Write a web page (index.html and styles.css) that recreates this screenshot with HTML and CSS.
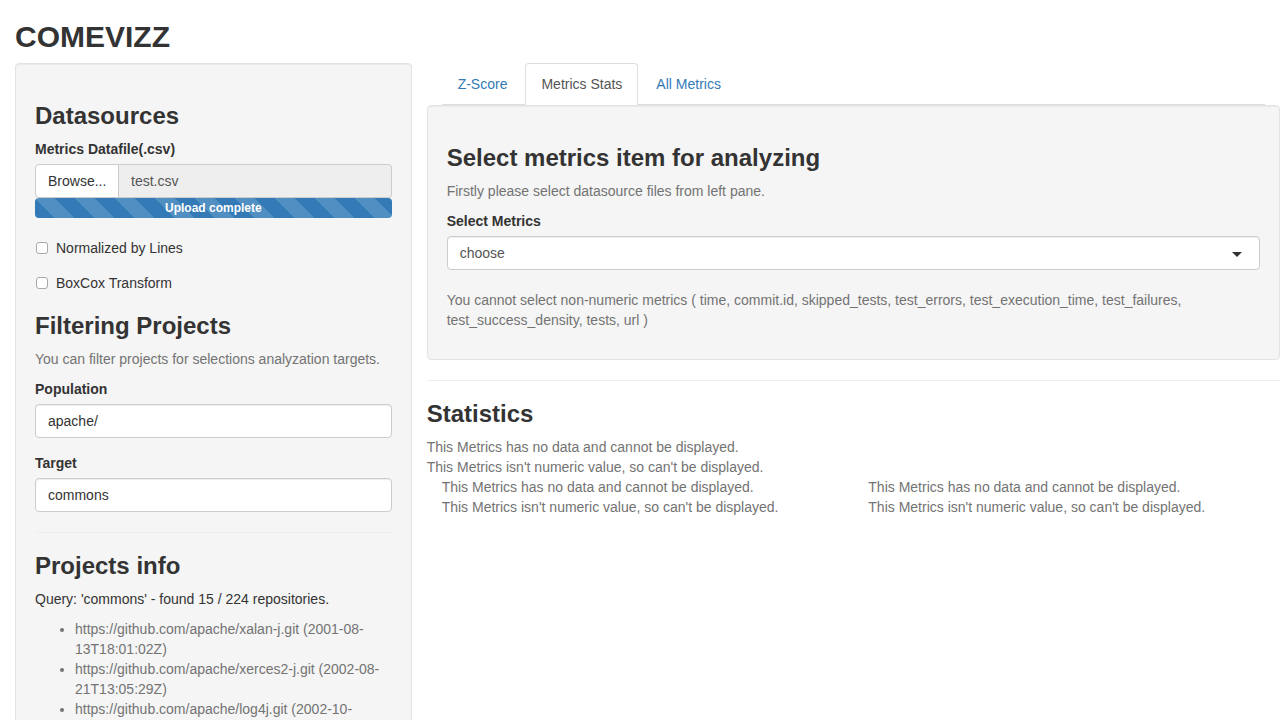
FILE: index.html
```html
<!DOCTYPE html>
<html>
<head>
<meta charset="utf-8">
<title>COMEVIZZ</title>
<link rel="stylesheet" href="styles.css">
</head>
<body>
<div class="container">
  <h2 class="title">COMEVIZZ</h2>
  <div class="row">
    <div class="col-side">
      <div class="well">
        <h3 class="heading">Datasources</h3>
        <div class="form-group file-group">
          <label class="ctl-label">Metrics Datafile(.csv)</label>
          <div class="input-group">
            <span class="btn-browse">Browse...</span>
            <span class="file-name">test.csv</span>
          </div>
          <div class="progress">
            <div class="progress-bar">Upload complete</div>
          </div>
        </div>
        <div class="form-group">
          <label class="checkbox"><span class="cb"></span>Normalized by Lines</label>
        </div>
        <div class="form-group">
          <label class="checkbox"><span class="cb"></span>BoxCox Transform</label>
        </div>
        <h3 class="heading">Filtering Projects</h3>
        <p class="help">You can filter projects for selections analyzation targets.</p>
        <div class="form-group">
          <label class="ctl-label">Population</label>
          <div class="text-input">apache/</div>
        </div>
        <div class="form-group">
          <label class="ctl-label">Target</label>
          <div class="text-input">commons</div>
        </div>
        <hr class="rule">
        <h3 class="heading">Projects info</h3>
        <p class="query">Query: 'commons' - found 15 / 224 repositories.</p>
        <ul class="projects">
          <li>https://github.com/apache/xalan-j.git (2001-08-13T18:01:02Z)</li>
          <li>https://github.com/apache/xerces2-j.git (2002-08-21T13:05:29Z)</li>
          <li>https://github.com/apache/log4j.git (2002-10-13T09:12:44Z)</li>
          <li>https://github.com/apache/commons-lang.git (2002-07-19T03:35:40Z)</li>
        </ul>
      </div>
    </div>
    <div class="col-main">
      <ul class="nav-tabs">
        <li class="tab"><a>Z-Score</a></li>
        <li class="tab active"><a>Metrics Stats</a></li>
        <li class="tab"><a>All Metrics</a></li>
      </ul>
      <div class="tab-content">
        <div class="well well-main">
          <h3 class="heading">Select metrics item for analyzing</h3>
          <p class="help">Firstly please select datasource files from left pane.</p>
          <div class="form-group">
            <label class="ctl-label">Select Metrics</label>
            <div class="select-input">choose<span class="caret"></span></div>
          </div>
          <p class="help help-note">You cannot select non-numeric metrics ( time, commit.id, skipped_tests, test_errors, test_execution_time, test_failures, test_success_density, tests, url )</p>
        </div>
        <hr class="rule rule-main">
        <h3 class="heading">Statistics</h3>
        <div class="msg">This Metrics has no data and cannot be displayed.</div>
        <div class="msg">This Metrics isn't numeric value, so can't be displayed.</div>
        <div class="stat-row">
          <div class="stat-col">
            <div class="msg">This Metrics has no data and cannot be displayed.</div>
            <div class="msg">This Metrics isn't numeric value, so can't be displayed.</div>
          </div>
          <div class="stat-col">
            <div class="msg">This Metrics has no data and cannot be displayed.</div>
            <div class="msg">This Metrics isn't numeric value, so can't be displayed.</div>
          </div>
        </div>
      </div>
    </div>
  </div>
</div>
</body>
</html>
```
FILE: styles.css
```css
html, body {
  overflow: hidden;
}
* {
  box-sizing: border-box;
}
body {
  margin: 0;
  font-family: "Liberation Sans", Arial, sans-serif;
  font-size: 14px;
  line-height: 20px;
  color: #333;
  background: #fff;
}
.container {
  padding: 0 15px;
}
.title {
  margin: 20px 0 10px;
  font-size: 30px;
  line-height: 33px;
  font-weight: 700;
}
.row {
  display: flex;
  margin: 0 -15px;
}
.col-side {
  width: 33.3333%;
  padding: 0 15px;
}
.col-main {
  width: 66.6667%;
  padding: 0 15px;
}
.well {
  background: #f5f5f5;
  border: 1px solid #e3e3e3;
  border-radius: 4px;
  padding: 19px;
  box-shadow: inset 0 1px 1px rgba(0,0,0,.05);
  margin-bottom: 20px;
}
.heading {
  font-size: 24px;
  line-height: 26px;
  font-weight: 700;
  margin: 20px 0 10px;
}
.form-group {
  margin-bottom: 15px;
}
.file-group {
  margin-bottom: 20px;
}
.ctl-label {
  display: block;
  font-weight: 700;
  margin-bottom: 5px;
}
.input-group {
  display: flex;
  height: 34px;
}
.btn-browse {
  width: 84px;
  background: #fff;
  border: 1px solid #ccc;
  border-radius: 4px 0 0 4px;
  padding: 6px 12px;
  color: #333;
}
.file-name {
  flex: 1;
  background: #eee;
  border: 1px solid #ccc;
  border-left: none;
  border-radius: 0 4px 4px 0;
  padding: 6px 12px;
  color: #555;
}
.progress {
  height: 20px;
  border-radius: 4px;
  overflow: hidden;
  background: #f5f5f5;
}
.progress-bar {
  height: 20px;
  background-color: #337ab7;
  background-image: linear-gradient(45deg, rgba(255,255,255,.15) 25%, transparent 25%, transparent 50%, rgba(255,255,255,.15) 50%, rgba(255,255,255,.15) 75%, transparent 75%, transparent);
  background-size: 40px 40px;
  color: #fff;
  font-size: 12px;
  font-weight: 700;
  line-height: 20px;
  text-align: center;
}
.checkbox {
  display: flex;
  align-items: center;
  margin-top: 10px;
  height: 20px;
  font-weight: 400;
}
.cb {
  width: 12px;
  height: 12px;
  border: 1px solid #a8a8a8;
  border-radius: 3px;
  background: #fff;
  margin: 0 8px 0 1px;
}
.help {
  margin: 0 0 10px;
  color: #737373;
}
.text-input,
.select-input {
  position: relative;
  height: 34px;
  background: #fff;
  border: 1px solid #ccc;
  border-radius: 4px;
  padding: 6px 12px;
  box-shadow: inset 0 1px 1px rgba(0,0,0,.075);
}
.text-input {
  color: #333;
}
.select-input {
  color: #555;
}
.caret {
  position: absolute;
  right: 17px;
  top: 15px;
  width: 0;
  height: 0;
  border-left: 5px solid transparent;
  border-right: 5px solid transparent;
  border-top: 5px solid #333;
}
.rule {
  margin: 20px 0;
  border: 0;
  border-top: 1px solid #eee;
}
.query {
  margin: 0 0 10px;
}
.projects {
  margin: 0;
  padding-left: 40px;
  color: #737373;
}
.nav-tabs {
  display: flex;
  list-style: none;
  margin: 0;
  padding: 0;
  border-bottom: 1px solid #ddd;
}
.tab {
  margin-right: 2px;
  margin-bottom: -1px;
}
.tab a {
  display: block;
  padding: 10px 15px;
  line-height: 20px;
  color: #337ab7;
  border: 1px solid transparent;
  border-radius: 4px 4px 0 0;
}
.tab.active a {
  color: #555;
  background: #fff;
  border-color: #ddd;
  border-bottom-color: transparent;
}
.tab-content {
  margin: 0 -15px;
}
.well-main {
  margin-bottom: 20px;
}
.help-note {
  margin-top: 20px;
}
.msg {
  color: #737373;
}
.stat-row {
  display: flex;
}
.stat-col {
  width: 50%;
  padding: 0 15px;
}
```
